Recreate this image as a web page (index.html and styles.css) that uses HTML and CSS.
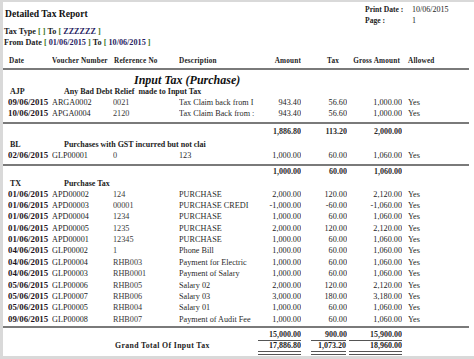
FILE: index.html
```html
<!DOCTYPE html>
<html>
<head>
<meta charset="utf-8">
<link rel="stylesheet" href="styles.css">
</head>
<body>
<div class="page">
  <header class="top">
    <div class="meta">
      <h1 class="title">Detailed Tax Report</h1>
      <p class="filter"><b>Tax Type</b> <span class="br">[</span> <span class="br">]</span> <b>To</b> <span class="br">[</span> <span class="val">ZZZZZZ</span> <span class="br">]</span></p>
      <p class="filter"><b>From Date</b> <span class="br">[</span> <span class="val">01/06/2015</span> <span class="br">]</span> <b>To</b> <span class="br">[</span> <span class="val">10/06/2015</span> <span class="br">]</span></p>
    </div>
    <dl class="print">
      <dt>Print Date :</dt><dd>10/06/2015</dd>
      <dt>Page :</dt><dd>1</dd>
    </dl>
  </header>

  <div class="r hd">
    <span class="c-date">Date</span>
    <span>Voucher Number</span>
    <span class="c-refh">Reference No</span>
    <span>Description</span>
    <span class="n">Amount</span>
    <span class="n c-taxh">Tax</span>
    <span class="n c-grossh">Gross Amount</span>
    <span class="al">Allowed</span>
  </div>

  <h2 class="sect">Input Tax (Purchase)</h2>

  <section class="grp">
    <div class="r gh"><span class="code">AJP</span><span class="gdesc">Any Bad Debt Relief&nbsp; made to Input Tax</span></div>
    <div class="r"><span class="d">09/06/2015</span><span>ARGA0002</span><span class="ref">0021</span><span class="desc">Tax Claim back from I</span><span class="n">943.40</span><span class="n">56.60</span><span class="n">1,000.00</span><span class="al">Yes</span></div>
    <div class="r"><span class="d">10/06/2015</span><span>APGA0004</span><span class="ref">2120</span><span class="desc">Tax Claim Back from :</span><span class="n">943.40</span><span class="n">56.60</span><span class="n">1,000.00</span><span class="al">Yes</span></div>
  </section>
  <div class="r sub"><span class="n a1">1,886.80</span><span class="n">113.20</span><span class="n">2,000.00</span></div>

  <section class="grp grp-bl">
    <div class="r gh"><span class="code">BL</span><span class="gdesc">Purchases with GST incurred but not clai</span></div>
    <div class="r"><span class="d">02/06/2015</span><span>GLP00001</span><span class="ref">0</span><span class="desc">123</span><span class="n">1,000.00</span><span class="n">60.00</span><span class="n">1,060.00</span><span class="al">Yes</span></div>
  </section>
  <div class="r sub sub-bl"><span class="n a1">1,000.00</span><span class="n">60.00</span><span class="n">1,060.00</span></div>

  <section class="grp grp-tx">
    <div class="r gh gh-tx"><span class="code">TX</span><span class="gdesc">Purchase Tax</span></div>
    <div class="r rt"><span class="d">01/06/2015</span><span>APD00002</span><span class="ref">124</span><span class="desc">PURCHASE</span><span class="n">2,000.00</span><span class="n">120.00</span><span class="n">2,120.00</span><span class="al">Yes</span></div>
    <div class="r rt"><span class="d">01/06/2015</span><span>APD00003</span><span class="ref">00001</span><span class="desc">PURCHASE CREDI</span><span class="n">-1,000.00</span><span class="n">-60.00</span><span class="n">-1,060.00</span><span class="al">Yes</span></div>
    <div class="r rt"><span class="d">01/06/2015</span><span>APD00004</span><span class="ref">1234</span><span class="desc">PURCHASE</span><span class="n">1,000.00</span><span class="n">60.00</span><span class="n">1,060.00</span><span class="al">Yes</span></div>
    <div class="r rt"><span class="d">01/06/2015</span><span>APD00005</span><span class="ref">1235</span><span class="desc">PURCHASE</span><span class="n">2,000.00</span><span class="n">120.00</span><span class="n">2,120.00</span><span class="al">Yes</span></div>
    <div class="r rt"><span class="d">01/06/2015</span><span>APD00001</span><span class="ref">12345</span><span class="desc">PURCHASE</span><span class="n">1,000.00</span><span class="n">60.00</span><span class="n">1,060.00</span><span class="al">Yes</span></div>
    <div class="r rt"><span class="d">04/06/2015</span><span>GLP00002</span><span class="ref">1</span><span class="desc">Phone Bill</span><span class="n">1,000.00</span><span class="n">60.00</span><span class="n">1,060.00</span><span class="al">Yes</span></div>
    <div class="r rt"><span class="d">04/06/2015</span><span>GLP00004</span><span class="ref">RHB003</span><span class="desc">Payment for Electric</span><span class="n">1,000.00</span><span class="n">60.00</span><span class="n">1,060.00</span><span class="al">Yes</span></div>
    <div class="r rt"><span class="d">04/06/2015</span><span>GLP00003</span><span class="ref">RHB0001</span><span class="desc">Payment of Salary</span><span class="n">1,000.00</span><span class="n">60.00</span><span class="n">1,060.00</span><span class="al">Yes</span></div>
    <div class="r rt"><span class="d">05/06/2015</span><span>GLP00006</span><span class="ref">RHB005</span><span class="desc">Salary 02</span><span class="n">2,000.00</span><span class="n">120.00</span><span class="n">2,120.00</span><span class="al">Yes</span></div>
    <div class="r rt"><span class="d">05/06/2015</span><span>GLP00007</span><span class="ref">RHB006</span><span class="desc">Salary 03</span><span class="n">3,000.00</span><span class="n">180.00</span><span class="n">3,180.00</span><span class="al">Yes</span></div>
    <div class="r rt"><span class="d">05/06/2015</span><span>GLP00005</span><span class="ref">RHB004</span><span class="desc">Salary 01</span><span class="n">1,000.00</span><span class="n">60.00</span><span class="n">1,060.00</span><span class="al">Yes</span></div>
    <div class="r rt"><span class="d">09/06/2015</span><span>GLP00008</span><span class="ref">RHB007</span><span class="desc">Payment of Audit Fee</span><span class="n">1,000.00</span><span class="n">60.00</span><span class="n">1,060.00</span><span class="al">Yes</span></div>
  </section>
  <div class="r sub sub-tx"><span class="n a1">15,000.00</span><span class="n">900.00</span><span class="n">15,900.00</span></div>

  <div class="r grand">
    <span class="glabel">Grand Total Of Input Tax</span>
    <span class="n gt gt-a"><i>17,886.80</i></span>
    <span class="n gt gt-t"><i>1,073.20</i></span>
    <span class="n gt gt-g"><i>18,960.00</i></span>
  </div>
</div>
</body>
</html>
```

FILE: styles.css
```css
html, body {
  margin: 0;
  padding: 0;
}
body {
  background: #d9d9d9;
  font-family: "Liberation Serif", "Times New Roman", serif;
  color: #1c1c1c;
  width: 474px;
  height: 359px;
  overflow: hidden;
}
.page {
  margin: 2px 0 0 3px;
  height: 354px;
  background: #fff;
  overflow: hidden;
}

/* header */
.top {
  display: flex;
  justify-content: space-between;
  padding-top: 1.5px;
  height: 44px;
}
.meta {
  padding-left: 1px;
}
.title {
  margin: 3.5px 0 0 1px;
  height: 14px;
  line-height: 14px;
  font-size: 9.6px;
  font-weight: bold;
  color: #111;
}
.filter {
  margin: 0;
  height: 11px;
  line-height: 11px;
  font-size: 8.2px;
  white-space: nowrap;
}
.title + .filter {
  margin-top: 4.5px;
}
.filter b {
  font-weight: bold;
}
.br {
  color: #3f7a1f;
  font-weight: bold;
}
.val {
  color: #2a1f63;
  font-weight: bold;
}
.print {
  margin: 0 14px 0 0;
  display: grid;
  grid-template-columns: 47px 48px;
  grid-auto-rows: 11px;
  line-height: 11px;
  font-size: 7.6px;
}
.print dt {
  font-weight: bold;
}
.print dd {
  margin: 0;
  font-size: 8px;
}

/* rows */
.r {
  display: grid;
  grid-template-columns: 44px 61px 66px 79px 43px 46px 55px 1fr;
  padding-left: 5px;
  margin-right: 5px;
  height: 11px;
  line-height: 11px;
  font-size: 8.2px;
  white-space: nowrap;
}
.r > span {
  overflow: hidden;
}
.n {
  text-align: right;
}
.al {
  padding-left: 6px;
}
.d {
  font-weight: bold;
  font-size: 8.8px;
  color: #1e1420;
}
.ref {
  color: #3a3a3a;
}
.desc {
  color: #2a2a2a;
}

.hd {
  margin-top: 6.5px;
  height: 14px;
  line-height: 14px;
  font-size: 7.2px;
  font-weight: bold;
  letter-spacing: 0.2px;
  border-bottom: 2px solid #7a7a7a;
}
.c-date {
  padding-left: 1px;
}
.c-refh {
  padding-left: 1px;
}
.c-taxh {
  padding-right: 8px;
}
.c-grossh {
  padding-right: 2px;
}

.sect {
  margin: 4px 0 0 0;
  height: 12px;
  line-height: 12px;
  font-size: 12px;
  font-weight: bold;
  font-style: italic;
  padding-left: 131px;
  color: #111;
}

.grp {
  margin-right: 5px;
  padding-bottom: 3px;
  border-bottom: 2px solid #7a7a7a;
}
.grp .r {
  margin-right: 0;
}
.gh {
  font-weight: bold;
  font-size: 8px;
}
.gh .code {
  padding-left: 2px;
}
.gdesc {
  grid-column: 2 / span 6;
  padding-left: 12px;
}
.grp-tx {
  padding-bottom: 0.5px;
}
.gh-tx {
  height: 10px;
  line-height: 10px;
}
.rt {
  height: 11.4px;
  line-height: 11.4px;
}

.sub {
  margin-top: 3px;
  height: 10px;
  line-height: 10px;
  font-weight: bold;
  font-size: 8px;
  color: #2a2a2a;
}
.a1 {
  grid-column: 5;
}
.sub + .grp {
  margin-top: 1.5px;
}
.sub-bl {
  margin-top: 1.5px;
}
.sub-tx {
  margin-top: 2.5px;
}

.grand {
  height: 15px;
  line-height: 15px;
  font-weight: bold;
  font-size: 8px;
}
.glabel {
  grid-column: 3 / span 2;
  padding-left: 2px;
  letter-spacing: 0.35px;
  font-size: 7.8px;
  line-height: 11px;
}
.gt i {
  display: block;
  font-style: normal;
  height: 10px;
  line-height: 10px;
  border-top: 1px solid #555;
  border-bottom: 4px double #555;
}
.gt-t i {
  margin-left: 10px;
  margin-right: 1px;
}
.gt-g i {
  margin-left: 2px;
}
.gt-a i {
  margin-left: -3px;
}
```
